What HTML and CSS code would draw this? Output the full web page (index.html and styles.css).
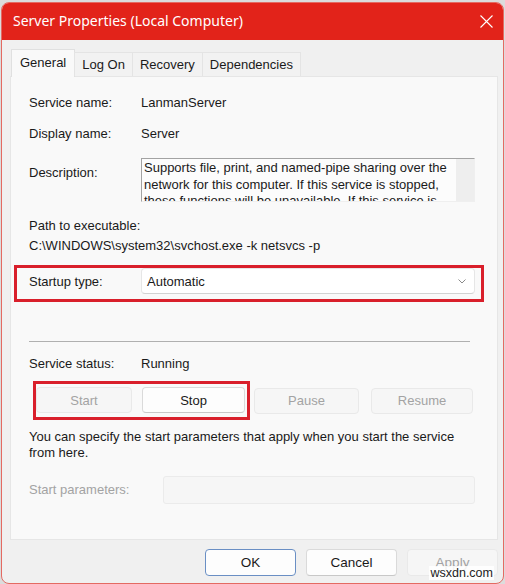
FILE: index.html
```html
<!DOCTYPE html>
<html lang="en">
<head>
  <meta charset="UTF-8" />
  <title>Server Properties (Local Computer)</title>
  <link rel="stylesheet" href="styles.css">
</head>
<body>
  <div class="window">
    <div class="titlebar">
      <span class="title">Server Properties (Local Computer)</span>
      <svg class="close" width="13" height="13" viewBox="0 0 13 13">
        <path d="M0.5 0.5 L12.5 12.5 M12.5 0.5 L0.5 12.5" stroke="#fff" stroke-width="1.1" fill="none" />
      </svg>
    </div>

    <div class="dialog">
      <div class="tabs">
        <div class="tab active">General</div>
        <div class="tab">Log On</div>
        <div class="tab">Recovery</div>
        <div class="tab">Dependencies</div>
      </div>

      <div class="panel">
        <div class="row">
          <span class="label">Service name:</span>
          <span>LanmanServer</span>
        </div>
        <div class="row gap-15">
          <span class="label">Display name:</span>
          <span>Server</span>
        </div>
        <div class="row desc-row">
          <span class="label desc-label">Description:</span>
          <div class="desc-box">
            <div class="desc-text">Supports file, print, and named-pipe sharing over the network for this computer. If this service is stopped, these functions will be unavailable. If this service is disabled, any services that explicitly depend on it will fail to start.</div>
            <div class="scrollbar"></div>
          </div>
        </div>
        <div class="path">
          <div class="path-line">Path to executable:</div>
          <div class="path-line">C:\WINDOWS\system32\svchost.exe -k netsvcs -p</div>
        </div>

        <div class="startup highlight">
          <span class="label">Startup type:</span>
          <div class="select">
            <span>Automatic</span>
            <svg width="8" height="5" viewBox="0 0 8 5">
              <path d="M0.5 0.5 L4 4 L7.5 0.5" stroke="#8a8a8a" stroke-width="1" fill="none" />
            </svg>
          </div>
        </div>

        <div class="separator"></div>

        <div class="row status">
          <span class="label">Service status:</span>
          <span>Running</span>
        </div>

        <div class="service-buttons">
          <div class="highlight btn-group">
            <button class="btn btn-start" disabled>Start</button>
            <button class="btn btn-stop">Stop</button>
          </div>
          <button class="btn btn-pause" disabled>Pause</button>
          <button class="btn btn-resume" disabled>Resume</button>
        </div>

        <p class="help">You can specify the start parameters that apply when you start the service from here.</p>

        <div class="row params">
          <span class="label params-label">Start parameters:</span>
          <div class="params-input"></div>
        </div>
      </div>

      <div class="footer">
        <button class="btn btn-default">OK</button>
        <button class="btn">Cancel</button>
        <button class="btn" disabled>Apply</button>
      </div>
    </div>

    <div class="watermark">wsxdn.com</div>
  </div>
</body>
</html>
```

FILE: styles.css
```css
* {
  box-sizing: border-box;
}

body {
  margin: 0;
  background: #dcdcdc;
  font-family: 'Liberation Sans', Arial, sans-serif;
  font-size: 13px;
  color: #1a1a1a;
}

.window {
  position: relative;
  width: 503px;
  height: 582px;
  margin: 2px 0 0 1px;
  border: 1px solid #e46a62;
  border-radius: 8px;
  background: #f0f0f0;
  overflow: hidden;
}

.titlebar {
  height: 37px;
  background: #e2231a;
  color: #fff;
  display: flex;
  align-items: center;
  justify-content: space-between;
  padding: 0 10px 2px 11px;
}

.title {
  font-family: 'Noto Sans', sans-serif;
  font-size: 14px;
}

.close {
  margin-top: 2px;
}

.dialog {
  padding: 9px 5px 0 8px;
}

/* tab strip */
.tabs {
  display: flex;
  align-items: flex-end;
  height: 27px;
  padding-left: 1px;
  position: relative;
  z-index: 1;
}

.tab {
  height: 24px;
  line-height: 23px;
  padding: 0 7px;
  background: #f2f2f2;
  border: 1px solid #e4e4e4;
  border-bottom: none;
}

.tab.active {
  height: 28px;
  margin-bottom: -1px;
  line-height: 25px;
  padding: 0 8px;
  background: #f9f9f9;
  border-color: #e0e0e0;
}

.tab + .tab {
  margin-left: -1px;
}

/* general panel */
.panel {
  height: 464px;
  background: #f9f9f9;
  border: 1px solid #e6e6e6;
  padding: 18px 22px 0 18px;
}

.row {
  display: flex;
  align-items: center;
  line-height: 16px;
}

.label {
  width: 112px;
  flex-shrink: 0;
}

.gap-15 {
  margin-top: 15px;
}

.desc-row {
  margin-top: 16px;
  align-items: flex-start;
}

.desc-label {
  padding-top: 7px;
}

.desc-box {
  flex: 1;
  height: 44px;
  display: flex;
  background: #fcfcfc;
  border: 1px solid;
  border-color: #a3a3a3 #efefef #efefef #a3a3a3;
  overflow: hidden;
}

.desc-text {
  flex: 1;
  padding: 1px 2px 0 2px;
  line-height: 16.5px;
}

.scrollbar {
  width: 18px;
  background: #eeeeee;
}

.path {
  margin-top: 16px;
  line-height: 16px;
}

.path-line + .path-line {
  margin-top: 4px;
}

.highlight {
  border: 3px solid #d91f2b;
}

.startup {
  display: flex;
  align-items: center;
  margin: 11px -9px 0 -15px;
  padding: 0 6px 5px 12px;
}

.select {
  flex: 1;
  height: 26px;
  display: flex;
  align-items: center;
  justify-content: space-between;
  padding: 0 8px 0 5px;
  background: #fff;
  border: 1px solid #e6e6e6;
  border-bottom-color: #d2d2d2;
  border-radius: 4px;
}

.separator {
  height: 1px;
  margin: 39px 5px 0 0;
  background: #b0b0b0;
}

.status {
  margin-top: 14px;
}

.service-buttons {
  display: flex;
  align-items: center;
  margin: 9px 0 0 4px;
}

.btn-group {
  display: flex;
  gap: 10px;
  padding: 3px 2px 4px 0;
}

.btn {
  height: 26px;
  font-family: inherit;
  font-size: 13px;
  color: #1a1a1a;
  background: #fdfdfd;
  border: 1px solid #dadada;
  border-bottom-color: #c8c8c8;
  border-radius: 4px;
  padding: 0;
}

.btn:disabled {
  color: #a3a3a3;
  background: #f6f6f6;
  border-color: #e9e9e9;
}

.btn-start {
  width: 96px;
}

.btn-stop {
  width: 103px;
}

.btn-pause {
  width: 105px;
  margin-left: 4px;
}

.btn-resume {
  width: 102px;
  margin-left: 12px;
}

.help {
  margin: 9px 0 0 0;
  line-height: 16px;
}

.params {
  margin-top: 15px;
}

.params-label {
  width: 134px;
  color: #a3a3a3;
}

.params-input {
  flex: 1;
  height: 28px;
  background: #f6f6f6;
  border: 1px solid #ebebeb;
  border-radius: 3px;
}

.footer {
  display: flex;
  justify-content: flex-end;
  gap: 10px;
  margin-top: 9px;
}

.footer .btn {
  width: 91px;
  height: 27px;
  font-size: 13.5px;
}

.footer .btn-default {
  border: 1px solid #6a8fc4;
}

.watermark {
  position: absolute;
  right: 9px;
  bottom: 3px;
  padding: 0 1px;
  font-size: 12.5px;
  line-height: 14px;
  color: #222;
  background: rgba(255, 255, 255, 0.85);
}
```
